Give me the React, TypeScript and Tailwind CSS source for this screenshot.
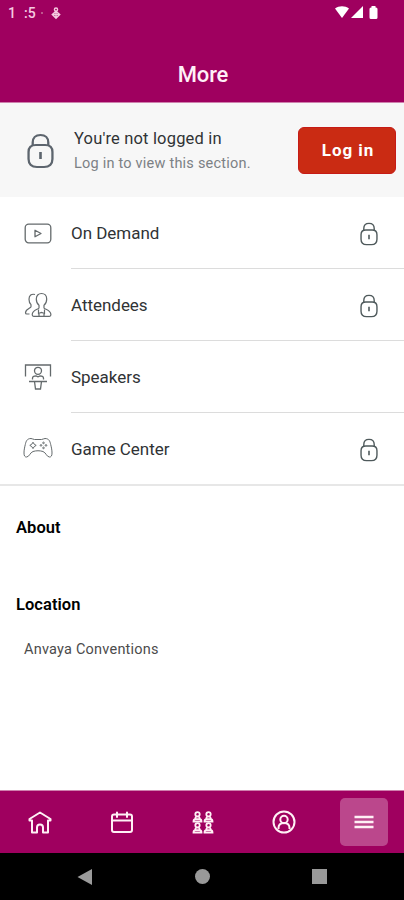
import React from "react";

function Lock({ className, width = 1.5 }: { className: string; width?: number }) {
  return (
    <svg viewBox="0 0 26 36" preserveAspectRatio="none" className={className} fill="none" stroke="currentColor" strokeWidth={width}>
      <path d="M5.500 13V9.500C5.500 4.800 8.300 2 13 2s7.500 2.800 7.500 7.500V13" />
      <path d="M8.500 12h9c5 0 7 2.500 7 7v7c0 5-3 8-8 8h-7c-5 0-8-3-8-8v-7c0-4.500 2-7 7-7Z" />
      <path d="M13 19v7" strokeWidth={width * 1.15} />
    </svg>
  );
}

function VideoIcon() {
  return (
    <svg viewBox="0 0 28 28" className="size-7" fill="none" stroke="currentColor" strokeWidth="1.300">
      <rect x="1.200" y="4.200" width="25.600" height="18.600" rx="3.500" />
      <path d="M11 10.200v6.600l6-3.300Z" strokeLinejoin="round" />
    </svg>
  );
}

function PeopleIcon() {
  return (
    <svg viewBox="0 0 28 28" className="size-7" fill="none" stroke="currentColor" strokeWidth="1.200">
      <path d="M11 2.500C7.500 1.500 5 3.500 5 7.200c0 2.300.8 4.300 2 5.500v2c0 1.500-5.500 2-5.500 6 0 .9.400 1.300 1.300 1.300H5.500" />
      <path d="M17.500 1.500c-3.200 0-5.200 2.200-5.200 5.500 0 3 1 5 2.700 6.300V16c-1 1.500-6.800 1.700-6.800 6.800 0 1 .5 1.500 1.500 1.500h15.700c1 0 1.500-.5 1.500-1.500 0-5.100-5.900-5.300-6.900-6.800v-2.700c1.700-1.300 2.700-3.300 2.700-6.300 0-3.300-2-5.500-5.200-5.500Z" />
      <path d="M14.500 17.500v4l3-1 3 1v-4M15 24.300v-3.300M20 24.300V21" />
    </svg>
  );
}

function SpeakerIcon() {
  return (
    <svg viewBox="0 0 28 28" className="size-7" fill="none" stroke="currentColor" strokeWidth="1.300">
      <path d="M1.500 12.500V1h25v11.500" />
      <circle cx="14" cy="6.800" r="3.500" />
      <path d="M8.500 15.500v-1.200c0-1.700 1.300-2.500 3.500-2.500l2 1 2-1c2.200 0 3.500.8 3.500 2.500v1.200M5 17.500h18M10.500 17.500l1 7.500h5l1-7.500" />
    </svg>
  );
}

function GameIcon() {
  return (
    <svg viewBox="0 0 30 28" className="h-7 w-[30px]" fill="none" stroke="currentColor" strokeWidth="1">
      <path d="M8 3.500c1.500 0 2 1 3.500 1h7c1.500 0 2-1 3.500-1 4 0 5 2.800 5.700 6 .8 3.400 1.300 5.500 1.300 8.500 0 2.800-.8 4-2.500 4-2.800 0-3.500-4.500-6.500-5.500-3-1-7-1-10 0-3 1-3.700 5.500-6.500 5.500C1.800 22 1 20.800 1 18c0-3 .5-5.100 1.300-8.500C3 6.300 4 3.500 8 3.500Z" />
      <path d="m10 7.200 1.200 2 2 1.200-2 1.200-1.200 2-1.200-2-2-1.200 2-1.200Z" />
      <circle cx="20.500" cy="7.900" r=".8" /><circle cx="20.500" cy="12.900" r=".8" />
      <circle cx="18" cy="10.400" r=".8" /><circle cx="23" cy="10.400" r=".8" />
    </svg>
  );
}

function Pawn({ x, y }: { x: number; y: number }) {
  return (
    <g transform={`translate(${x} ${y})`}>
      <circle cx="5" cy="2.800" r="2.200" />
      <path d="M3.500 5.200 2.500 7.500M6.500 5.200l1 2.300M1 10c0-1.600.8-2.400 2-2.400h4c1.200 0 2 .8 2 2.400Z" />
    </g>
  );
}

const rows = [
  { label: "On Demand", icon: <VideoIcon />, locked: true },
  { label: "Attendees", icon: <PeopleIcon />, locked: true },
  { label: "Speakers", icon: <SpeakerIcon />, locked: false },
  { label: "Game Center", icon: <GameIcon />, locked: true },
];

export default function App() {
  return (
    <div className="flex h-[900px] w-[404px] flex-col overflow-hidden bg-white font-[Roboto,sans-serif] text-[#303335]">
      <header className="h-[103px] shrink-0 border-b border-[#ce80ad] bg-[#9f005f] text-white">
        <div className="flex h-[26px] items-center justify-between pl-2 pr-[25px]">
          <div className="flex items-center text-[14px] font-medium text-[#f5cae1]">
            <span className="w-4">1</span>
            <span className="w-[16px]">:5</span>
            <span className="ml-[1px] size-[2px] bg-[#bd568c]" />
            <svg viewBox="0 0 10 14" className="ml-[8px] h-[13px] w-[10px]" fill="none" stroke="currentColor" strokeWidth="1.500">
              <circle cx="5" cy="2.800" r="1.700" /><path d="m5 4.500 4 3.500-4 4-4-4ZM2 8h6M5 4.500v7" />
            </svg>
          </div>
          <svg viewBox="0 0 44 14" className="h-[14px] w-11" fill="white">
            <path d="M0 2.500c4-3 10-3 14 0L7 12Z" /><path d="M28 0v12H16Z" />
            <path d="M34.500 3q0-1.500 1.500-1.500h.5V0h4v1.500h.5q1.500 0 1.500 1.500v8.500q0 1.500-1.500 1.500h-5q-1.500 0-1.500-1.500Z" />
          </svg>
        </div>
        <h1 className="pl-[2px] pt-[34px] text-center text-[22px] font-medium leading-[30px] tracking-[-0.150px] text-[#fff0f8]">More</h1>
      </header>

      <section className="flex h-[94px] shrink-0 items-center bg-[#f7f7f7] pl-[27px] pr-2">
        <Lock className="mt-[2px] h-9 w-[27px] text-[#5d656e]" width={2.200} />
        <div className="ml-[20px] flex-1 whitespace-nowrap">
          <p className="mt-[2px] text-[16.500px] leading-6 tracking-[0.170px]">You're not logged in</p>
          <p className="mt-[1px] text-[14.500px] leading-6 tracking-[0.220px] text-[#7c8185]">Log in to view this section.</p>
        </div>
        <button className="h-[47px] w-[98px] rounded-[6px] border border-[#c61b16] bg-[#ca2b13] pl-[2px] pt-[2px] text-[17px] font-bold tracking-[0.950px] text-white">Log in</button>
      </section>

      <nav className="shrink-0 border-b-2 border-[#e7e7e7]">
        {rows.map((row, i) => (
          <div key={row.label} className={`flex pl-[22px] ${i < 3 ? "h-[72px]" : "h-[71px]"}`}>
            <div className="flex w-[49px] items-center pt-px text-[#646a6c]"><div className="flex w-8 justify-center">{row.icon}</div></div>
            <div className={`flex flex-1 items-center justify-between pr-[26px] pt-[2px] ${i < 3 ? "border-b border-[#dcdcdc]" : ""}`}>
              <span className="text-[17px] tracking-[-0.030px]">{row.label}</span>
              {row.locked && <Lock className="h-6 w-[18px] text-[#4e595b]" width={2} />}
            </div>
          </div>
        ))}
      </nav>

      <main className="flex-1 px-4 pt-[30px]">
        <h2 className="text-[16.500px] font-semibold leading-6 tracking-[0.050px] text-black">About</h2>
        <h2 className="mt-[53px] text-[16.500px] font-semibold leading-6 tracking-[0.050px] text-black">Location</h2>
        <p className="mt-[21px] pl-2 text-[14.500px] leading-6 tracking-[0.220px] text-[#4c4c4c]">Anvaya Conventions</p>
      </main>

      <nav className="flex h-[63px] shrink-0 items-center border-t border-[#cf80ae] bg-[#9f005f] text-[#fff0f5]">
        <div className="flex w-20 justify-center">
          <svg viewBox="0 0 24 24" className="size-6" fill="none" stroke="currentColor" strokeWidth="2" strokeLinejoin="round" strokeLinecap="round"><path d="m1.500 9 10.500-6.500L22.500 9v1.500H20v12h-5v-5c0-4-6-4-6 0v5H4v-12H1.500Z" /></svg>
        </div>
        <div className="flex w-[84px] justify-center">
          <svg viewBox="0 0 24 24" className="size-6" fill="none" stroke="currentColor" strokeWidth="2" strokeLinecap="round"><rect x="2" y="4.500" width="20" height="17.500" rx="2" /><path d="M2 10.500h20M7 2.500v4.500M17 2.500v4.500" /></svg>
        </div>
        <div className="flex w-[78px] justify-center">
          <svg viewBox="0 0 24 24" className="size-6" fill="none" stroke="currentColor" strokeWidth="1.800"><Pawn x={1.500} y={1.500} /><Pawn x={12.500} y={1.500} /><Pawn x={1.500} y={12.500} /><Pawn x={12.500} y={12.500} /></svg>
        </div>
        <div className="flex w-[83px] justify-center">
          <svg viewBox="0 0 24 24" className="size-6" fill="none" stroke="currentColor" strokeWidth="2"><circle cx="12" cy="12" r="10.500" /><circle cx="12" cy="9.500" r="3.700" /><path d="M6.500 19v-1c0-3 2-5 5.500-5s5.500 2 5.500 5v1" /></svg>
        </div>
        <button className="ml-[15px] flex size-12 items-center justify-center rounded-[5px] bg-[#bb478c]">
          <svg viewBox="0 0 20 16" className="h-4 w-5" stroke="currentColor" strokeWidth="2.500"><path d="M.5 3h19M.5 8h19M.5 13h19" /></svg>
        </button>
      </nav>

      <footer className="flex h-[47px] shrink-0 items-center bg-black pl-[77px] text-[#9b9b9b]">
        <svg viewBox="0 0 16 16" className="size-4" fill="currentColor"><path d="M15 0v16L.5 8Z" /></svg>
        <div className="ml-[102px] size-[15px] rounded-full bg-[#999]" />
        <div className="ml-[102px] size-[15px] bg-[#999]" />
      </footer>
    </div>
  );
}
